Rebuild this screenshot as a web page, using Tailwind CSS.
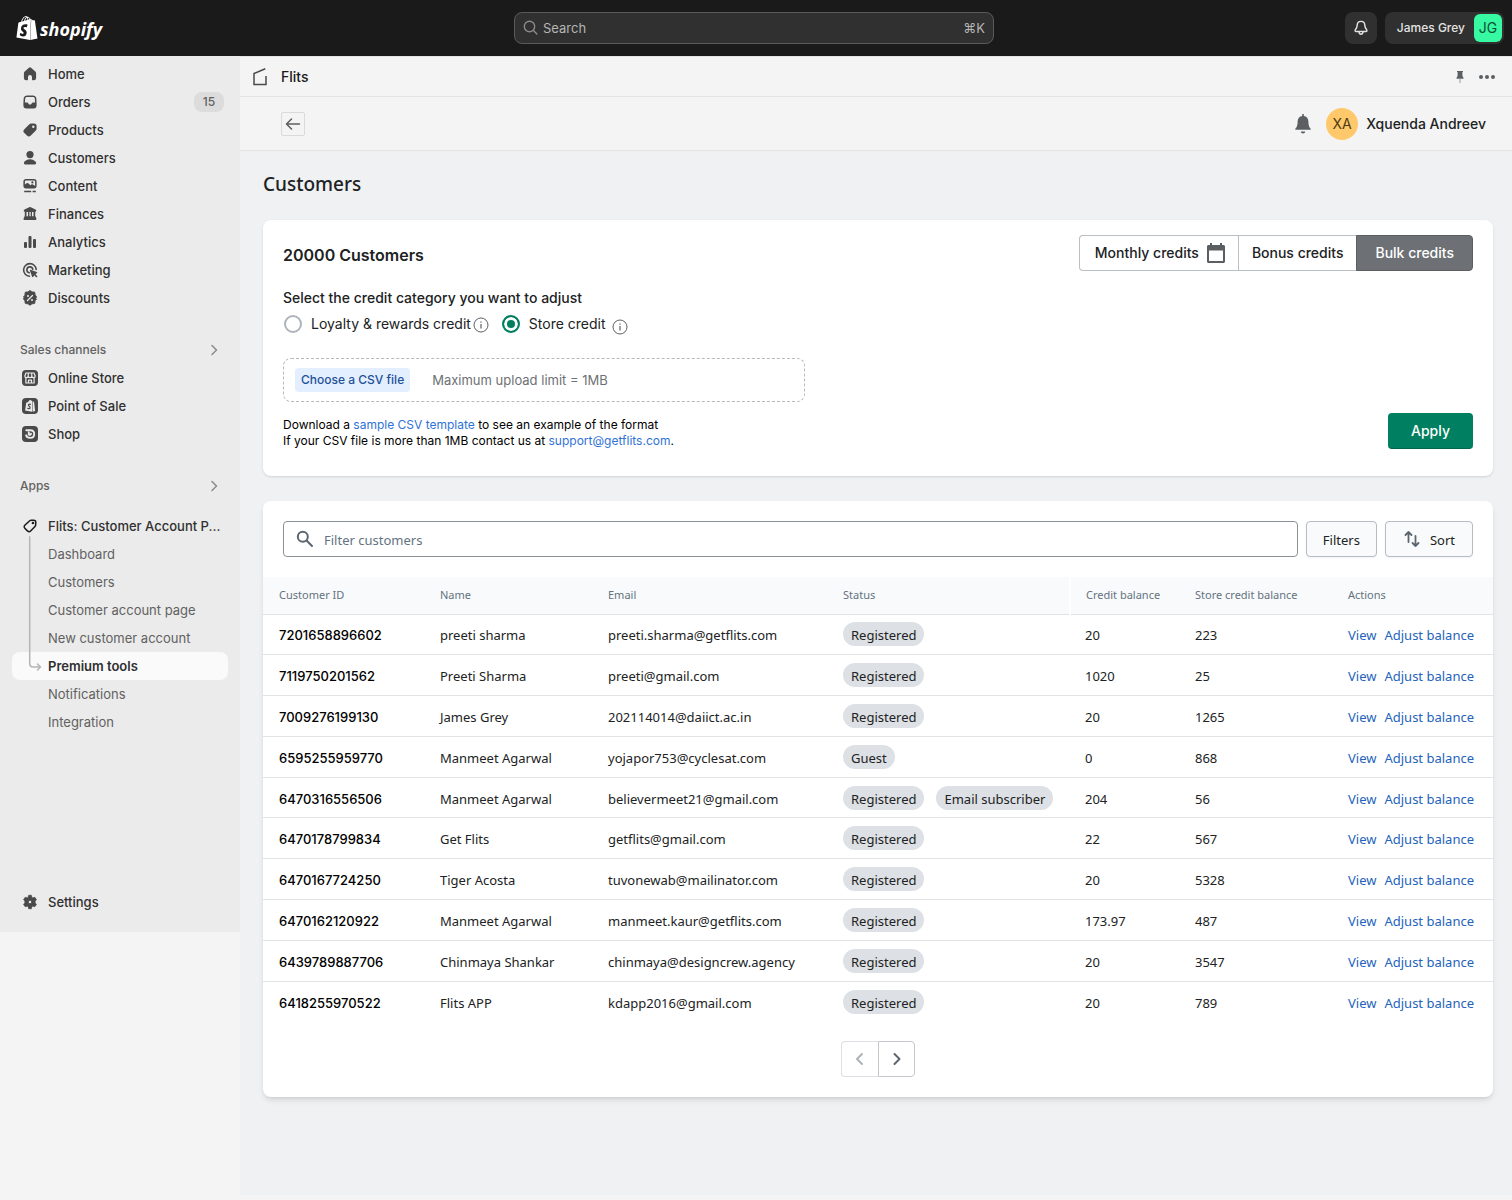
<!DOCTYPE html>
<html lang="en">
<head>
    <meta charset="UTF-8">
    <meta name="viewport" content="width=device-width, initial-scale=1.0">
    <title>Flits - Customers</title>
    <script src="https://cdn.jsdelivr.net/npm/@tailwindcss/browser@4"></script>
</head>
<body class="min-h-screen bg-[#f4f4f4] font-[Inter,'Liberation_Sans',sans-serif] text-[#202223]">

    <!-- Top bar -->
    <header class="grid h-14 grid-cols-[1fr_480px_1fr] items-center bg-[#1a1a1a] pr-2 pl-1">
        <a href="#" class="ml-3 flex items-center gap-0.5 text-white">
            <svg class="h-6 w-[22px]" viewBox="1 0 22 24" fill="currentColor">
                <path d="M15.337 23.979l7.216-1.561s-2.604-17.613-2.625-17.73c-.018-.116-.114-.192-.211-.192s-1.929-.136-1.929-.136-1.275-1.274-1.439-1.411c-.045-.037-.075-.057-.121-.074l-.914 21.104h.023zM11.71 11.305s-.81-.424-1.774-.424c-1.447 0-1.504.906-1.504 1.141 0 1.232 3.24 1.715 3.24 4.629 0 2.295-1.44 3.76-3.406 3.76-2.354 0-3.54-1.465-3.54-1.465l.646-2.086s1.245 1.066 2.28 1.066c.675 0 .975-.545.975-.932 0-1.619-2.654-1.694-2.654-4.359-.034-2.237 1.571-4.416 4.827-4.416 1.257 0 1.875.361 1.875.361l-.945 2.715-.02.01zM11.17.83c.136 0 .271.038.405.135-.984.465-2.064 1.639-2.508 3.992-.656.213-1.293.405-1.889.578C7.697 3.75 8.951.84 11.17.84V.83zm1.235 2.949v.135c-.754.232-1.583.484-2.394.736.466-1.777 1.333-2.645 2.085-2.971.193.501.309 1.176.309 2.1zm.539-2.234c.694.074 1.141.867 1.429 1.755-.349.114-.735.231-1.158.366v-.252c0-.752-.096-1.371-.271-1.871v.002zm2.992 1.289c-.02 0-.06.021-.078.021s-.289.075-.714.21c-.423-1.233-1.176-2.37-2.508-2.37h-.115C12.135.209 11.669 0 11.265 0 8.159 0 6.675 3.877 6.21 5.846c-1.194.365-2.063.636-2.16.674-.675.213-.694.232-.772.87-.075.462-1.83 14.063-1.83 14.063L15.009 24l.927-21.166z"/>
            </svg>
            <span class="pt-0.5 font-['Open_Sans',sans-serif] text-lg leading-6 font-bold italic">shopify</span>
        </a>
        <label class="flex h-8 items-center gap-1 rounded-lg border border-[#5a5a5a] bg-[#303030] px-2 text-[#b5b5b5]">
            <svg class="size-4 text-[#8a8a8a]" viewBox="0 0 16 16" fill="none" stroke="currentColor" stroke-width="1.4" stroke-linecap="round">
                <circle cx="6.500" cy="6.500" r="5.2"/><path d="M10.500 10.500l3.400 3.400"/>
            </svg>
            <input type="search" placeholder="Search" aria-label="Search" class="grow bg-transparent text-[13px]/5 outline-none placeholder:text-[#b5b5b5]">
            <kbd class="font-[Inter,sans-serif] text-[13px]/5">⌘K</kbd>
        </label>
        <div class="flex justify-end gap-2">
            <button aria-label="Notifications" class="flex size-8 items-center justify-center rounded-lg bg-[#303030] text-[#e3e3e3]">
                <svg class="size-4" viewBox="0 0 16 16" fill="none" stroke="currentColor" stroke-width="1.4" stroke-linejoin="round" stroke-linecap="round">
                    <path d="M8 1.400c-2.300 0-3.700 1.700-3.800 3.700-.1 2.200-.6 3.200-1.700 4.400-.9 1-.4 2 .7 2h9.600c1.100 0 1.600-1 .7-2-1.100-1.200-1.600-2.200-1.700-4.400C11.700 3.100 10.300 1.400 8 1.400z"/>
                    <path d="M6 11.800c0 1.400.8 2.400 2 2.400s2-1 2-2.400"/>
                </svg>
            </button>
            <button class="flex h-8 items-center gap-[9px] rounded-lg bg-[#303030] pr-0.5 pl-3 text-xs font-medium text-[#e3e3e3]">
                James Grey
                <span class="flex size-7 items-center justify-center rounded-md bg-[#36f9a1] text-sm font-normal text-[#0d4f36]">JG</span>
            </button>
        </div>
    </header>

    <div class="flex items-start">

        <!-- Sidebar -->
        <nav class="flex min-h-[876px] w-60 shrink-0 flex-col bg-[#ebebeb] px-3 pt-1 pb-4 text-[13px]/5 font-medium text-[#303030]">
            <ul>
                <li><a href="#" class="flex h-7 items-center gap-2 px-2">
                    <svg class="size-5 text-[#4a4a4a]" viewBox="0 0 20 20" fill="currentColor"><path d="M8.700 3.900a1.900 1.900 0 0 1 2.600 0l4 3.700c.5.500.8 1.100.8 1.800v4.600a2.200 2.200 0 0 1-2.200 2.200h-1.200a.7.700 0 0 1-.7-.7v-2.400a2 2 0 0 0-4 0v2.400a.7.700 0 0 1-.7.700H6.100a2.200 2.200 0 0 1-2.200-2.200V9.400c0-.7.300-1.300.8-1.800z"/></svg>
                    Home</a></li>
                <li><a href="#" class="flex h-7 items-center gap-2 pr-1 pl-2">
                    <svg class="size-5 text-[#4a4a4a]" viewBox="0 0 20 20" fill="currentColor"><path fill-rule="evenodd" d="M6.800 3.500h6.400a3.200 3.200 0 0 1 3.100 2.500l.3 5.300v2.200a3 3 0 0 1-3 3H6.400a3 3 0 0 1-3-3v-2.200L3.700 6a3.200 3.200 0 0 1 3.100-2.500zM6.900 5c-.9 0-1.600.6-1.700 1.500L4.900 10.500h2.300c.4 0 .7.200.9.500l.5.900c.3.500.7.700 1.400.7s1.100-.2 1.400-.7l.5-.9c.2-.3.500-.5.9-.5h2.300l-.3-4c-.1-.9-.8-1.500-1.700-1.500z"/></svg>
                    Orders <span class="ml-auto flex h-5 w-[30px] items-center justify-center rounded-lg bg-[#dcdcdc] text-xs text-[#616161]">15</span></a></li>
                <li><a href="#" class="flex h-7 items-center gap-2 px-2">
                    <svg class="size-5 text-[#4a4a4a]" viewBox="0 0 20 20" fill="currentColor"><path fill-rule="evenodd" d="M11.400 3.500h2.600a2.600 2.600 0 0 1 2.600 2.600v2.400c0 .9-.3 1.700-1 2.300l-4.800 4.800a2.700 2.700 0 0 1-3.900 0l-2.500-2.500a2.700 2.700 0 0 1 0-3.900l4.700-4.700c.6-.6 1.400-1 2.300-1zM13.300 7.900a1.200 1.200 0 1 0 0-2.400 1.200 1.200 0 0 0 0 2.400z"/></svg>
                    Products</a></li>
                <li><a href="#" class="flex h-7 items-center gap-2 px-2">
                    <svg class="size-5 text-[#4a4a4a]" viewBox="0 0 20 20" fill="currentColor"><circle cx="10" cy="6.600" r="3.600"/><path d="M10 11.300c-2.900 0-5 1.300-6 3.200-.4.800.2 1.900 1.300 1.900h9.400c1.100 0 1.700-1.100 1.300-1.900-1-1.900-3.100-3.200-6-3.200z"/></svg>
                    Customers</a></li>
                <li><a href="#" class="flex h-7 items-center gap-2 px-2">
                    <svg class="size-5 text-[#4a4a4a]" viewBox="0 0 20 20" fill="currentColor"><path fill-rule="evenodd" d="M6 3h8a2.600 2.600 0 0 1 2.600 2.600v4.200A2.600 2.600 0 0 1 14 12.400H6a2.600 2.600 0 0 1-2.600-2.600V5.600A2.600 2.600 0 0 1 6 3zm0 1.500c-.6 0-1.100.5-1.100 1.100v3l1.700-1.400c.5-.4 1.100-.4 1.600 0l2.300 2 .8-.6c.5-.4 1.100-.3 1.600 0l2.200 1.500V5.600c0-.6-.5-1.100-1.100-1.100zm6.400 3a1.100 1.100 0 1 0 0-2.200 1.100 1.100 0 0 0 0 2.200z"/><path d="M4.200 14.800h7v1.500h-7zM12.600 14.800h3.200v1.500h-3.200z"/></svg>
                    Content</a></li>
                <li><a href="#" class="flex h-7 items-center gap-2 px-2">
                    <svg class="size-5 text-[#4a4a4a]" viewBox="0 0 20 20" fill="currentColor"><path d="M9.200 3.200a1.800 1.800 0 0 1 1.600 0l4.700 2.400c1.300.6.9 2.400-.5 2.400H5C3.600 8 3.200 6.200 4.500 5.600zM4.800 8h1.700v5H4.800zM8 8h1.400v5H8zM10.700 8H12v5h-1.300zM13.500 8h1.700v5h-1.700zM4.600 12.300h10.800l1 2.200c.3.700-.1 1.500-.9 1.500h-11c-.8 0-1.200-.8-.9-1.500z"/></svg>
                    Finances</a></li>
                <li><a href="#" class="flex h-7 items-center gap-2 px-2">
                    <svg class="size-5 text-[#4a4a4a]" viewBox="0 0 20 20" fill="currentColor"><rect x="4" y="10" width="3" height="6" rx="1"/><rect x="8.500" y="4" width="3" height="12" rx="1"/><rect x="13" y="7" width="3" height="9" rx="1"/></svg>
                    Analytics</a></li>
                <li><a href="#" class="flex h-7 items-center gap-2 px-2">
                    <svg class="size-5 text-[#4a4a4a]" viewBox="0 0 20 20" fill="none" stroke="currentColor" stroke-width="1.600" stroke-linecap="round"><path d="M16.200 9.500A6.300 6.300 0 1 0 9.500 16.200"/><path d="M12.800 9.200A3 3 0 1 0 9.200 12.800"/><path fill="currentColor" stroke="none" d="M10.600 9.800l6.200 2.200c.6.200.6 1 .1 1.300l-1.500.8 1.700 1.800c.7.700-.4 1.800-1.100 1.100l-1.800-1.700-.8 1.500c-.3.500-1.100.5-1.300-.1l-2.200-6.200c-.1-.4.300-.8.700-.7z"/></svg>
                    Marketing</a></li>
                <li><a href="#" class="flex h-7 items-center gap-2 px-2">
                    <svg class="size-5 text-[#4a4a4a]" viewBox="0 0 20 20" fill="currentColor"><path d="M8.600 3.300a1.900 1.900 0 0 1 2.800 0l.6.700 1-.1a1.900 1.900 0 0 1 2.100 2.100l-.1 1 .8.600a1.900 1.900 0 0 1 0 2.800l.8 1-1 .6-.6.700.1 1a1.900 1.900 0 0 1-2.100 2.100l-1-.1-.6.700a1.900 1.900 0 0 1-2.800 0l-.6-.7-1 .1a1.900 1.900 0 0 1-2.100-2.100l.1-1-.8-.6a1.900 1.900 0 0 1 0-2.800L3.400 9l1-1 .6-1-.1-1A1.900 1.900 0 0 1 7 3.900l1 .1z" stroke="currentColor" stroke-width=".8" stroke-linejoin="round"/><path d="M7.500 12.500l5-5" stroke="#ebebeb" stroke-width="1.300" stroke-linecap="round"/><circle cx="8" cy="8" r="1" fill="#ebebeb"/><circle cx="12" cy="12" r="1" fill="#ebebeb"/></svg>
                    Discounts</a></li>
            </ul>

            <a href="#" class="mt-6 flex h-7 items-center justify-between pr-1 pl-2 text-xs text-[#616161]">
                Sales channels
                <svg class="size-5 text-[#8a8a8a]" viewBox="0 0 20 20" fill="none" stroke="currentColor" stroke-width="1.500" stroke-linecap="round" stroke-linejoin="round"><path d="M8 5.500l4.500 4.500L8 14.500"/></svg>
            </a>
            <ul>
                <li><a href="#" class="flex h-7 items-center gap-2 px-2">
                    <svg class="size-5" viewBox="0 0 20 20" fill="none" stroke="#ebebeb"><rect x="2" y="2" width="16" height="16" rx="4" fill="#4a4a4a" stroke="none"/><path stroke-width="1.200" stroke-linejoin="round" d="M6 5h8l1.200 3c0 1-.7 1.600-1.700 1.600-.9 0-1.700-.6-1.700-1.600 0 1-.8 1.600-1.800 1.600S8.200 9 8.200 8c0 1-.8 1.600-1.700 1.600C5.500 9.600 4.800 9 4.800 8zM8.300 5.200L8.200 8M11.700 5.200l.1 2.800M5.900 9.800V15h8.200V9.800M8.500 15v-2.800h3V15"/></svg>
                    Online Store</a></li>
                <li><a href="#" class="flex h-7 items-center gap-2 px-2">
                    <svg class="size-5" viewBox="0 0 20 20"><rect x="2" y="2" width="16" height="16" rx="4" fill="#4a4a4a"/><path fill="#ebebeb" d="M6.200 6.700l2-.6C8.600 4.800 9.500 4 10.400 4c.5 0 .9.300 1.100.8l.9.400-.4 10.600-6.900-1.200zM12.900 5.300l1.200.9 1 8.700-2.600.8z"/><path fill="none" stroke="#4a4a4a" stroke-width="1.200" stroke-linecap="round" d="M10.400 8.400c-1-.5-2-.1-2 .7 0 1.100 1.800 1.300 1.700 2.600-.1 1-1.300 1.300-2.300.6"/></svg>
                    Point of Sale</a></li>
                <li><a href="#" class="flex h-7 items-center gap-2 px-2">
                    <svg class="size-5" viewBox="0 0 20 20"><rect x="2" y="2" width="16" height="16" rx="4" fill="#4a4a4a"/><path fill="none" stroke="#ebebeb" stroke-width="1.900" stroke-linecap="round" stroke-linejoin="round" d="M6.300 6.200h4c2.300 0 3.900 1.600 3.900 3.800s-1.600 3.900-4 3.900c-2.100 0-3.700-1-4.100-2.600M8.800 8.400v2.300c1.300.4 2.200-.1 2.200-1"/></svg>
                    Shop</a></li>
            </ul>

            <a href="#" class="mt-6 flex h-7 items-center justify-between pr-1 pl-2 text-xs text-[#616161]">
                Apps
                <svg class="size-5 text-[#8a8a8a]" viewBox="0 0 20 20" fill="none" stroke="currentColor" stroke-width="1.500" stroke-linecap="round" stroke-linejoin="round"><path d="M8 5.500l4.500 4.500L8 14.500"/></svg>
            </a>
            <a href="#" class="mt-3 flex h-7 items-center gap-2 pl-2">
                <svg class="size-5 shrink-0 text-[#1a1a1a]" viewBox="0 0 20 20" fill="none" stroke="currentColor" stroke-width="1.500" stroke-linejoin="round"><path d="M11.300 4.200h2.500a2 2 0 0 1 2 2l-.1 2.600c0 .6-.3 1.200-.7 1.600l-4.400 4.700a2 2 0 0 1-2.900 0l-2.900-2.900a2 2 0 0 1 0-2.900l4.900-4.500c.4-.4 1-.6 1.600-.6z"/><circle cx="13" cy="7" r=".6" fill="currentColor"/></svg>
                <span class="truncate">Flits: Customer Account P...</span>
            </a>
            <ul class="relative font-normal text-[#616161]">
                <li><a href="#" class="flex h-7 items-center pl-9">Dashboard</a></li>
                <li><a href="#" class="flex h-7 items-center pl-9">Customers</a></li>
                <li><a href="#" class="flex h-7 items-center pl-9">Customer account page</a></li>
                <li><a href="#" class="flex h-7 items-center pl-9">New customer account</a></li>
                <li><a href="#" aria-current="page" class="flex h-7 items-center rounded-lg bg-[#fafafa] pl-9 font-semibold text-[#303030]">Premium tools</a></li>
                <li><a href="#" class="flex h-7 items-center pl-9">Notifications</a></li>
                <li><a href="#" class="flex h-7 items-center pl-9">Integration</a></li>
                <!-- Connector to the selected page -->
                <svg class="absolute -top-1 left-4 h-[136px] w-4 text-[#b5b5b5]" viewBox="0 0 16 136" fill="none" stroke="currentColor" stroke-width="1.500" stroke-linecap="round" stroke-linejoin="round"><path d="M1.700 .8V128a3 3 0 0 0 3 3H12M9.500 128l3 3-3 3"/></svg>
            </ul>

            <a href="#" class="mt-auto flex h-7 items-center gap-2 px-2">
                <svg class="size-5 text-[#4a4a4a]" viewBox="0 0 20 20" fill="currentColor"><path fill-rule="evenodd" d="M8.700 3.300h2.600l.5 2 1 .6 2-.6 1.600 2.300-1.300 1.500v1.800l1.300 1.500-1.600 2.300-2-.6-1 .6-.5 2H8.700l-.5-2-1-.6-2 .6-1.600-2.300 1.300-1.500V9.100L3.600 7.600l1.600-2.300 2 .6 1-.6zM10 11.700a1.700 1.700 0 1 0 0-3.400 1.700 1.700 0 0 0 0 3.400z" stroke="currentColor" stroke-width=".8" stroke-linejoin="round"/></svg>
                Settings
            </a>
        </nav>

        <main class="min-w-0 grow">
            <!-- App title bar -->
            <div class="flex h-[41px] items-center border-y border-[#e3e3e3] bg-[#f4f4f4] pr-4 pl-3">
                <svg class="h-[18px] w-4" viewBox="0 0 16 18" fill="none" stroke="#4a4a4a" stroke-width="1.500"><path d="M13.300 .8L2 5.500V16.500h12V8"/></svg>
                <h2 class="ml-[13px] text-sm font-medium text-[#1a1a1a]">Flits</h2>
                <button aria-label="Pin" class="ml-auto">
                    <svg class="h-3 w-2" viewBox="0 0 8 12"><path fill="#5c5f62" d="M1 0h6v1H6.400v3.800L7.500 7v.8H.5V7l1.100-2.200V1H1z"/><path fill="#a5a8ab" d="M3.400 7.800h1.200V12H3.400z"/></svg>
                </button>
                <button aria-label="More actions" class="ml-[15px]">
                    <svg class="h-4 w-[17px]" viewBox="0 0 17 16" fill="#5c5f62"><circle cx="2" cy="8" r="2"/><circle cx="8" cy="8" r="2"/><circle cx="14" cy="8" r="2"/></svg>
                </button>
            </div>
            <div class="flex h-[54px] items-center border-b border-[#e1e3e5] bg-[#f4f4f4] pr-[26px] pl-[41px]">
                <button aria-label="Back" class="flex size-6 items-center justify-center rounded-xs border border-[#d9dadb] text-[#5c5f62]">
                    <svg class="size-4" viewBox="0 0 16 16" fill="none" stroke="currentColor" stroke-width="1.500" stroke-linecap="round" stroke-linejoin="round"><path d="M14.500 8H1.800M6.500 3L1.500 8l5 5"/></svg>
                </button>
                <button aria-label="Alerts" class="ml-auto text-[#5c5f62]">
                    <svg class="h-5 w-4" viewBox="0 0 16 20" fill="currentColor"><path d="M7.200 0h1.600v1.900c2.800.4 4.600 2.500 4.600 5.500 0 3.600.6 5.500 2.300 7.400v1H.3v-1C2 12.900 2.600 11 2.600 7.400c0-3 1.800-5.100 4.600-5.500zM5.800 17.600h4.400c0 1.200-1 2-2.200 2s-2.200-.8-2.200-2z"/></svg>
                </button>
                <span class="ml-[15px] flex size-8 items-center justify-center rounded-full bg-[#ffc96b] text-sm text-[#4f3b12]">XA</span>
                <span class="ml-2 text-sm font-medium">Xquenda Andreev</span>
            </div>

            <div class="bg-[#f0f1f3] pt-[19px] pr-[19px] pb-[98px] pl-[23px]">
                <h1 class="font-['Noto_Sans','Open_Sans',sans-serif] text-[19px]/7 font-medium">Customers</h1>

                <!-- Credit adjustment -->
                <section class="mt-[22px] flex flex-col rounded-lg bg-white px-5 pt-[15px] pb-[27px] shadow-sm">
                    <div class="flex items-center justify-between">
                        <h2 class="pt-1 text-base font-semibold">20000 Customers</h2>
                        <div class="flex h-9 text-sm font-medium">
                            <button class="flex items-center gap-1.5 rounded-l border border-r-0 border-[#babfc3] pr-[11px] pl-[15px]">
                                Monthly credits
                                <svg class="size-[22px]" viewBox="0 0 22 22" fill="#5c5f62"><path fill-rule="evenodd" d="M5 1h2v2h8V1h2v2h1.500C19.300 3 20 3.700 20 4.500v15c0 .8-.7 1.500-1.500 1.500h-15c-.8 0-1.500-.7-1.500-1.500v-15C2 3.700 2.700 3 3.500 3H5zM4 8.500V19h14V8.500z"/></svg>
                            </button>
                            <button class="border-y border-l border-[#babfc3] px-[13px]">Bonus credits</button>
                            <button class="rounded-r border border-[#5c5f62] bg-[#6d7175] px-[18px] text-white">Bulk credits</button>
                        </div>
                    </div>

                    <fieldset class="mt-[17px]">
                        <legend class="text-sm font-medium">Select the credit category you want to adjust</legend>
                        <div class="mt-1 flex h-6 items-center text-sm">
                            <input type="radio" name="category" id="loyalty" class="ml-px size-[18px] appearance-none rounded-full border-2 border-[#aeb4bb] checked:border-[#008060] checked:bg-[#008060] checked:shadow-[inset_0_0_0_3px_#fff]">
                            <label for="loyalty" class="ml-[9px]">Loyalty &amp; rewards credit</label>
                            <svg class="mt-0.5 ml-0.5 size-4" viewBox="0 0 16 16" fill="none" stroke="#5c5f62"><circle cx="8" cy="8" r="7"/><path stroke-width="1.200" d="M8 7v4.500M8 4.500v1.200"/></svg>
                            <input type="radio" name="category" id="store" checked class="ml-[13px] size-[18px] appearance-none rounded-full border-2 border-[#aeb4bb] checked:border-[#008060] checked:bg-[#008060] checked:shadow-[inset_0_0_0_3px_#fff]">
                            <label for="store" class="ml-[9px]">Store credit</label>
                            <svg class="mt-1.5 ml-1.5 size-4" viewBox="0 0 16 16" fill="none" stroke="#5c5f62"><circle cx="8" cy="8" r="7"/><path stroke-width="1.200" d="M8 7v4.500M8 4.500v1.200"/></svg>
                        </div>
                    </fieldset>

                    <div class="mt-[22px] flex h-11 w-[522px] items-center rounded-lg border border-dashed border-[#b4b9be] px-[11px]">
                        <label class="flex h-6 items-center rounded-sm bg-[#e3eefe] px-1.5 text-xs font-medium text-[#1f5199]">
                            Choose a CSV file
                            <input type="file" accept=".csv" class="sr-only">
                        </label>
                        <span class="ml-[22px] text-[13px]/5 text-[#6d7175]">Maximum upload limit = 1MB</span>
                    </div>

                    <div class="mt-[11px] flex items-start justify-between">
                        <p class="pt-1 text-xs text-black">
                            Download a <a href="#" class="text-[#2f73d6]">sample CSV template</a> to see an example of the format<br>
                            If your CSV file is more than 1MB contact us at <a href="mailto:support@getflits.com" class="text-[#2f73d6]">support@getflits.com</a>.
                        </p>
                        <button class="h-9 w-[85px] rounded border-b border-[#00664d] bg-[#008060] text-sm font-medium text-white">Apply</button>
                    </div>
                </section>

                <!-- Customer list -->
                <section class="mt-[25px] rounded-lg bg-white pt-5 pb-5 font-['Noto_Sans','Open_Sans',sans-serif] text-[13px]/5 shadow-md">
                    <div class="flex gap-2 px-5">
                        <label class="flex h-9 grow items-center gap-[9px] rounded border border-[#8c9196] px-[11px]">
                            <svg class="size-5" viewBox="0 0 20 20" fill="none" stroke="#5c6670" stroke-width="2" stroke-linecap="round"><circle cx="7.800" cy="7.800" r="5"/><path d="M11.800 11.800l5.200 5.200"/></svg>
                            <input type="text" placeholder="Filter customers" aria-label="Filter customers" class="grow bg-transparent pt-0.5 outline-none placeholder:text-[#637381]">
                        </label>
                        <button class="h-9 rounded border border-[#b5bcc4] bg-[#f9fafb] px-4 pt-0.5 shadow-xs">Filters</button>
                        <button class="flex h-9 items-center gap-2 rounded border border-[#b5bcc4] bg-[#f9fafb] pr-[17px] pl-4 shadow-xs">
                            <svg class="size-5" viewBox="0 0 20 20" fill="none" stroke="#5c6670" stroke-width="1.800" stroke-linecap="round" stroke-linejoin="round"><path d="M6.500 13V3M3.500 6l3-3 3 3M13.500 7v10M10.500 14l3 3 3-3"/></svg>
                            <span class="pt-0.5">Sort</span>
                        </button>
                    </div>

                    <table class="mt-5 h-[445px] w-full table-fixed border-collapse text-left whitespace-nowrap">
                        <colgroup>
                            <col class="w-[161px]"><col class="w-[168px]"><col class="w-[235px]"><col class="w-[243px]"><col class="w-[109px]"><col class="w-[153px]"><col class="w-[161px]">
                        </colgroup>
                        <thead class="h-[37px] bg-[#f9fafb] text-[11px]/4 text-[#637381]">
                            <tr>
                                <th class="pl-4 font-normal">Customer ID</th>
                                <th class="pl-4 font-normal">Name</th>
                                <th class="pl-4 font-normal">Email</th>
                                <th class="border-r-2 border-white pl-4 font-normal">Status</th>
                                <th class="pl-[15px] font-normal">Credit balance</th>
                                <th class="pl-4 font-normal">Store credit balance</th>
                                <th class="pl-4 font-normal">Actions</th>
                            </tr>
                        </thead>
                        <tbody id="customers"></tbody>
                    </table>

                    <div class="mt-[19px] flex justify-center">
                        <button aria-label="Previous page" disabled class="flex h-9 w-[37px] items-center justify-center rounded-l border border-r-0 border-[#dcdfe3] text-[#adb3ba]">
                            <svg class="size-5" viewBox="0 0 20 20" fill="none" stroke="currentColor" stroke-width="2" stroke-linecap="round" stroke-linejoin="round"><path d="M12 5l-5 5 5 5"/></svg>
                        </button>
                        <button aria-label="Next page" class="flex h-9 w-[37px] items-center justify-center rounded-r border border-[#c4c8cd] text-[#5c6670]">
                            <svg class="size-5" viewBox="0 0 20 20" fill="none" stroke="currentColor" stroke-width="2" stroke-linecap="round" stroke-linejoin="round"><path d="M7.500 5l5 5-5 5"/></svg>
                        </button>
                    </div>
                </section>
            </div>
        </main>
    </div>

    <script>
        const customers = [
            ['7201658896602', 'preeti sharma', 'preeti.sharma@getflits.com', ['Registered'], '20', '223'],
            ['7119750201562', 'Preeti Sharma', 'preeti@gmail.com', ['Registered'], '1020', '25'],
            ['7009276199130', 'James Grey', '202114014@daiict.ac.in', ['Registered'], '20', '1265'],
            ['6595255959770', 'Manmeet Agarwal', 'yojapor753@cyclesat.com', ['Guest'], '0', '868'],
            ['6470316556506', 'Manmeet Agarwal', 'believermeet21@gmail.com', ['Registered', 'Email subscriber'], '204', '56'],
            ['6470178799834', 'Get Flits', 'getflits@gmail.com', ['Registered'], '22', '567'],
            ['6470167724250', 'Tiger Acosta', 'tuvonewab@mailinator.com', ['Registered'], '20', '5328'],
            ['6470162120922', 'Manmeet Agarwal', 'manmeet.kaur@getflits.com', ['Registered'], '173.97', '487'],
            ['6439789887706', 'Chinmaya Shankar', 'chinmaya@designcrew.agency', ['Registered'], '20', '3547'],
            ['6418255970522', 'Flits APP', 'kdapp2016@gmail.com', ['Registered'], '20', '789'],
        ];

        // Render one row per customer
        document.getElementById('customers').innerHTML = customers.map(([id, name, email, tags, credit, store]) => `
            <tr class="h-10 border-t border-[#e1e3e5]">
                <td class="pt-0.5 pl-4 font-[Inter,sans-serif] font-medium text-black">${id}</td>
                <td class="pt-0.5 pl-4">${name}</td>
                <td class="pt-0.5 pl-4">${email}</td>
                <td class="pl-4"><div class="flex gap-3">${tags.map((tag) => `<span class="flex h-6 items-center rounded-full bg-[#dde0e4] px-2 pt-0.5">${tag}</span>`).join('')}</div></td>
                <td class="pt-0.5 pl-[15px]">${credit}</td>
                <td class="pt-0.5 pl-4">${store}</td>
                <td class="pt-0.5 pl-4 text-[#2463bc]"><a href="#" class="mr-2">View</a><a href="#">Adjust balance</a></td>
            </tr>`).join('');
    </script>
</body>
</html>
